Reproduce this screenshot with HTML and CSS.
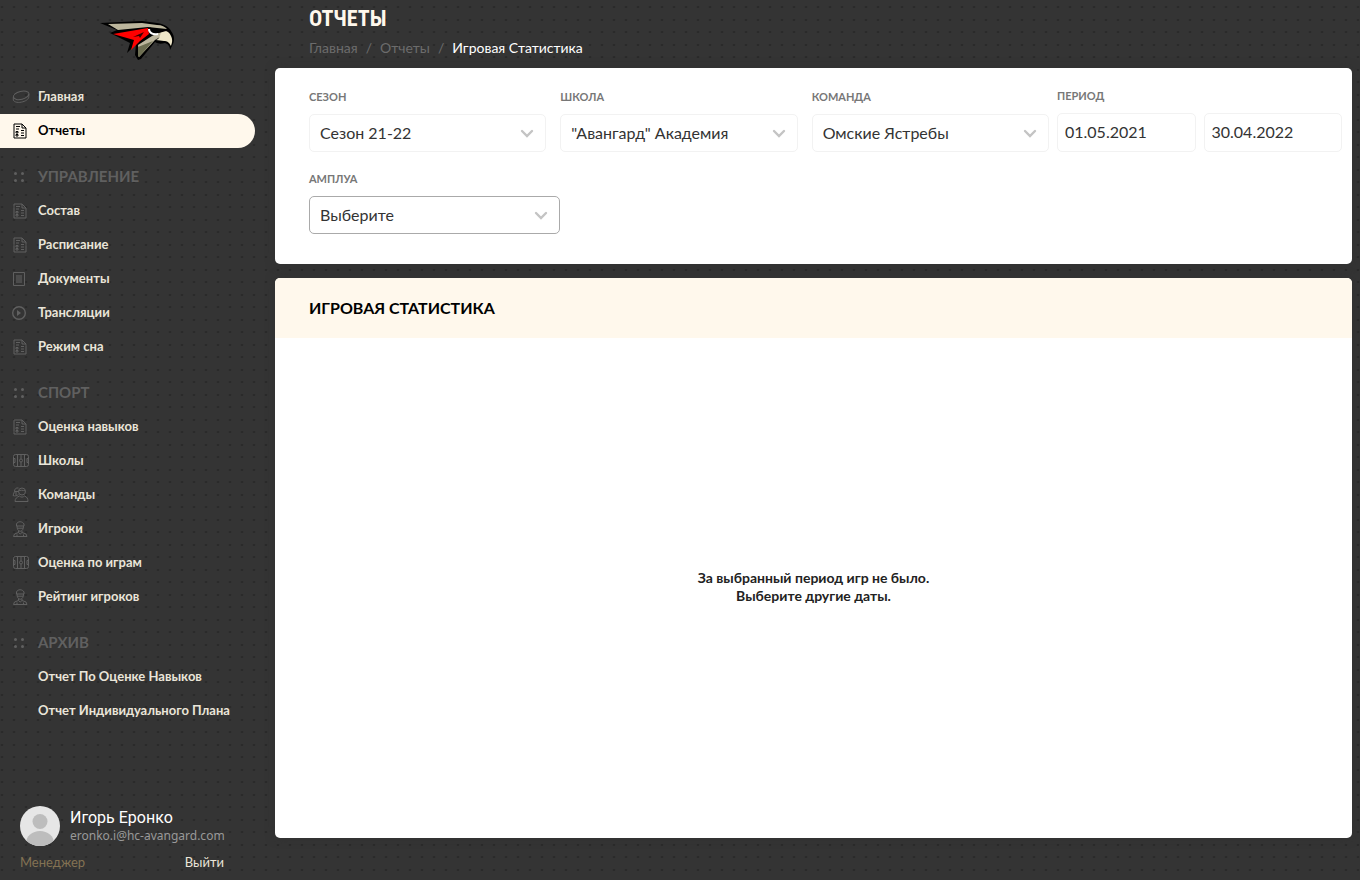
FILE: index.html
```html
<!DOCTYPE html>
<html lang="ru">
<head>
<meta charset="utf-8">
<title>Отчеты — Игровая статистика</title>
<link rel="stylesheet" href="styles.css">
</head>
<body>
<svg class="sprite" aria-hidden="true">
  <symbol id="puck" viewBox="0 0 18 18"><ellipse cx="9.200" cy="7.300" rx="8" ry="4" transform="rotate(-14 9.200 7.300)"/><path d="M1.300 9v3c1 2.500 5.500 3 9.500 1.800 4-1.100 6.200-3.300 6-5.300V6"/></symbol>
  <symbol id="report" viewBox="0 0 18 18"><path d="M2 2h8l4 4v10H2zM10 2v4h4M4 4.500h4M4 7h3M9 8.500h3M9 11h3M9 13.500h3M4 9.500h2v1.500H4zM4 12.500h2V14H4z"/></symbol>
  <symbol id="document" viewBox="0 0 18 18"><path d="M1.500 2.500h11v13h-11z"/><path class="solid dim" d="M4 5h6v8H4z"/></symbol>
  <symbol id="play" viewBox="0 0 18 18"><circle cx="7" cy="9" r="6.300" stroke-width="1.400"/><path class="solid" d="M5 6v6l4-3z"/></symbol>
  <symbol id="rink" viewBox="0 0 18 18"><rect x="1.500" y="2.500" width="15" height="12" rx="2"/><path d="M5.500 2.500v12M12.500 2.500v12M9 2.500V7M9 10v4.500M1.500 6.500H3v4H1.500M16.500 6.500H15v4h1.500"/><circle cx="9" cy="8.500" r="1.500"/></symbol>
  <symbol id="team" viewBox="0 0 18 18"><circle cx="10" cy="5.500" r="3.500"/><path d="M6.500 5c2-1 4-1 7 0M3 15.500c0-3 2-4.500 4.500-5.500 1.500 1.500 3.500 1.500 5 0 2.500 1 3.500 2.500 3.500 5.500zM6.500 2C4 1.500 2.500 3 2.500 5.500L1 9.500c2 .8 4 .4 5.500-1M2.500 5.500h4M4 6v3"/></symbol>
  <symbol id="player" viewBox="0 0 18 18"><path d="M4.500 6V4c1-3 6-3 7.500 0v2zM5 6c0 3 1 5 3.200 5.300C10.500 11 11.500 9 11.500 6M5.500 8.200h5.500M6.500 11v1.500l-4 1.500-1 2.500h13.500L14 14l-4-1.500V11M5 14.500v2M11.500 14.500v2M6.500 12.500l1.700 1.500 1.800-1.500"/></symbol>
  <symbol id="grip" viewBox="0 0 18 18"><g class="solid"><circle cx="3.500" cy="5.500" r="1.500"/><circle cx="10.500" cy="5.500" r="1.500"/><circle cx="3.500" cy="12.500" r="1.500"/><circle cx="10.500" cy="12.500" r="1.500"/></g></symbol>
</svg>
<div class="app">
  <aside class="sidebar">
    <a class="logo" href="#" aria-label="Авангард">
      <svg viewBox="0 0 76 42" width="76" height="42">
        <path d="M0 4l42-2 15 2c8 1 13 5 14 8 3 4 4 8 2 13l-3 6c0-4-2-6-5-7-4 1-7 1-10-1L41 40l-3 1-3-5 1-11-9 9 3-10L10 14l7-3z" fill="#000"/>
        <path d="M8 5l34-1 15 2c5 0 8 2 10 4l-10-1-9-1-30 3z" fill="#bcb69d"/>
        <path d="M13 15l35-6 1 6-9 7-9 9 3-10z" fill="#f00"/>
        <path d="M33 18l11-5-4 6-1-2z" fill="#300"/>
        <path d="M52 17l8-4 6-1-6 6-5 3-16 17-1-12z" fill="#bcb69d"/>
        <path d="M38 28l15-6-13 15-2 1z" fill="#6d6e52"/>
        <path d="M49 10c0 4 4 6 9 5" fill="none" stroke="#fff" stroke-width="2"/>
        <path d="M61 13c4-2 8-1 10 4 2 4 1 7 0 10-2-4-4-5-7-5l-8-1c4-1 4-5 5-8z" fill="#eee6c8"/>
        <path d="M49 8l8 3 9 1-7 2-6-1z" fill="#000"/>
      </svg>
    </a>
    <nav class="menu">
      <a class="item" href="#"><svg class="icon"><use href="#puck"/></svg>Главная</a>
      <a class="item active" href="#"><svg class="icon"><use href="#report"/></svg>Отчеты</a>
      <h2 class="group"><svg class="icon"><use href="#grip"/></svg>УПРАВЛЕНИЕ</h2>
      <a class="item" href="#"><svg class="icon"><use href="#report"/></svg>Состав</a>
      <a class="item" href="#"><svg class="icon"><use href="#report"/></svg>Расписание</a>
      <a class="item" href="#"><svg class="icon"><use href="#document"/></svg>Документы</a>
      <a class="item" href="#"><svg class="icon"><use href="#play"/></svg>Трансляции</a>
      <a class="item" href="#"><svg class="icon"><use href="#report"/></svg>Режим сна</a>
      <h2 class="group"><svg class="icon"><use href="#grip"/></svg>СПОРТ</h2>
      <a class="item" href="#"><svg class="icon"><use href="#report"/></svg>Оценка навыков</a>
      <a class="item" href="#"><svg class="icon"><use href="#rink"/></svg>Школы</a>
      <a class="item" href="#"><svg class="icon"><use href="#team"/></svg>Команды</a>
      <a class="item" href="#"><svg class="icon"><use href="#player"/></svg>Игроки</a>
      <a class="item" href="#"><svg class="icon"><use href="#rink"/></svg>Оценка по играм</a>
      <a class="item" href="#"><svg class="icon"><use href="#player"/></svg>Рейтинг игроков</a>
      <h2 class="group"><svg class="icon"><use href="#grip"/></svg>АРХИВ</h2>
      <a class="item plain" href="#">Отчет По Оценке Навыков</a>
      <a class="item plain" href="#">Отчет Индивидуального Плана</a>
    </nav>
    <footer class="account">
      <div class="person">
        <svg class="avatar" viewBox="0 0 40 40" width="40" height="40"><clipPath id="round"><circle cx="20" cy="20" r="20"/></clipPath><g clip-path="url(#round)"><path fill="#e6e6e6" d="M0 0h40v40H0z"/><circle cx="20" cy="15.500" r="7.500" fill="#bdbdbd"/><ellipse cx="20" cy="37" rx="14" ry="12" fill="#bdbdbd"/></g></svg>
        <div>
          <div class="name">Игорь Еронко</div>
          <div class="email">eronko.i@hc-avangard.com</div>
        </div>
      </div>
      <div class="role-row"><span class="role">Менеджер</span><button class="logout" type="button">Выйти</button></div>
    </footer>
  </aside>
  <main class="main">
    <header class="page-head">
      <h1>ОТЧЕТЫ</h1>
      <nav class="crumbs"><a href="#">Главная</a><span>/</span><a href="#">Отчеты</a><span>/</span><strong>Игровая Статистика</strong></nav>
    </header>
    <form class="panel filters">
      <div class="choices">
        <div class="field"><label for="season">СЕЗОН</label><select id="season"><option>Сезон 21-22</option></select></div>
        <div class="field"><label for="school">ШКОЛА</label><select id="school"><option>"Авангард" Академия</option></select></div>
        <div class="field"><label for="team-name">КОМАНДА</label><select id="team-name"><option>Омские Ястребы</option></select></div>
        <div class="field position"><label for="position">АМПЛУА</label><select id="position"><option>Выберите</option></select></div>
      </div>
      <div class="field period">
        <label for="from">ПЕРИОД</label>
        <div class="dates"><input id="from" type="text" value="01.05.2021"><input type="text" value="30.04.2022" aria-label="Конец периода"></div>
      </div>
    </form>
    <section class="panel stats">
      <h2 class="stats-title">ИГРОВАЯ СТАТИСТИКА</h2>
      <p class="empty">За выбранный период игр не было.<br>Выберите другие даты.</p>
    </section>
  </main>
</div>
</body>
</html>
```
FILE: styles.css
```css
* { box-sizing: border-box; }
body {
  margin: 0;
  color: #222;
  font-family: Lato, "Open Sans", sans-serif;
  background-color: #343434;
  background-image:
    radial-gradient(2px 1px at 2px 7px, #292929 50%, transparent),
    radial-gradient(2px 1px at 2px 20px, #292929 50%, transparent);
  background-size: 12px 25px;
}
a { color: inherit; text-decoration: none; }
h1, h2, p { margin: 0; }
.sprite { display: none; }
.app { display: flex; min-height: 100vh; }

.sidebar {
  display: flex;
  flex: none;
  flex-direction: column;
  width: 275px;
  padding: 19px 20px 9px 0;
}
.logo { display: flex; height: 61px; padding-left: 100px; }
.item, .group {
  display: flex;
  align-items: center;
  height: 34px;
  padding: 0 0 2px 12px;
  gap: 8px;
  font-weight: 700;
}
.item { color: #eae5d9; font-size: 13px; }
.plain { padding-left: 38px; }
.group { margin-top: 12px; color: #606060; font-size: 15px; }
.active { border-radius: 0 17px 17px 0; background: #fff8ec; color: #000; }
.icon {
  flex: none;
  width: 18px;
  height: 18px;
  margin-top: 1px;
  fill: none;
  stroke: #606060;
  stroke-width: 1;
}
.solid { fill: #606060; stroke: none; }
.dim { fill: #4c4c4c; }
.active .icon { stroke: #000; }

.account { margin-top: auto; padding-left: 20px; }
.person { display: flex; gap: 10px; }
.name { padding-top: 1px; color: #fff; font: 16px/22px Roboto, sans-serif; }
.email { color: #999; font: 12px/14px "Noto Sans", sans-serif; }
.role-row {
  display: flex;
  justify-content: space-between;
  margin-top: 7px;
  padding-right: 31px;
  font-size: 13px;
  line-height: 18px;
}
.role { color: #837253; }
.logout { padding: 0; border: 0; background: none; color: #eae5d9; font: inherit; }

.main { display: flex; flex: 1; flex-direction: column; gap: 14px; min-width: 0; padding: 0 8px 42px 0; }
.page-head { height: 54px; padding-left: 34px; }
h1 {
  padding-top: 4px;
  color: #fff8ec;
  font: 700 22px/32px "Bebas Neue", "Roboto Condensed", "Liberation Sans Narrow", Roboto, sans-serif;
}
.crumbs { display: flex; gap: 8px; padding-top: 3px; color: #6c6c6c; font-size: 14px; line-height: 18px; }
.crumbs strong { color: #fff; font-weight: 400; }
.panel { border-radius: 5px; background: #fff; box-shadow: 0 0 10px #303030; }
.filters { display: flex; gap: 8px; padding: 20px 10px 30px 34px; }
.choices { display: grid; flex: 740; grid-template-columns: repeat(3, 1fr); gap: 19px 14px; padding-top: 1px; }
.period { flex: 285; }
.field { min-width: 0; }
.field label { display: block; height: 25px; color: #777; font-size: 11px; font-weight: 700; line-height: 16px; }
.position { margin-right: -14px; }
.field select, .field input {
  width: 100%;
  min-width: 0;
  height: 38px;
  padding: 0 10px 2px;
  border: 1px solid #f2f2f2;
  border-radius: 5px;
  background: #fff;
  color: #333;
  font: 16px Lato, "Open Sans", sans-serif;
}
.field select {
  appearance: none;
  background: url("data:image/svg+xml,%3Csvg xmlns='http://www.w3.org/2000/svg' width='14' height='10' fill='none' stroke='%23c4c4c4' stroke-width='2.400' stroke-linecap='round'%3E%3Cpath d='M2 2l5 5 5-5'/%3E%3C/svg%3E") no-repeat right 11px top 14px;
}
.field.position select { border-color: #aaa; }
.dates { display: flex; gap: 8px; }
.field .dates input { height: 39px; padding: 0 7px 2px; }

.stats { display: flex; flex: 1; flex-direction: column; overflow: hidden; }
.stats-title { padding: 0 34px; background: #fff8ec; color: #000; font-size: 16px; font-weight: 700; line-height: 60px; }
.empty { margin: auto; padding-bottom: 2px; font-size: 14px; font-weight: 700; line-height: 18px; text-align: center; }
```
